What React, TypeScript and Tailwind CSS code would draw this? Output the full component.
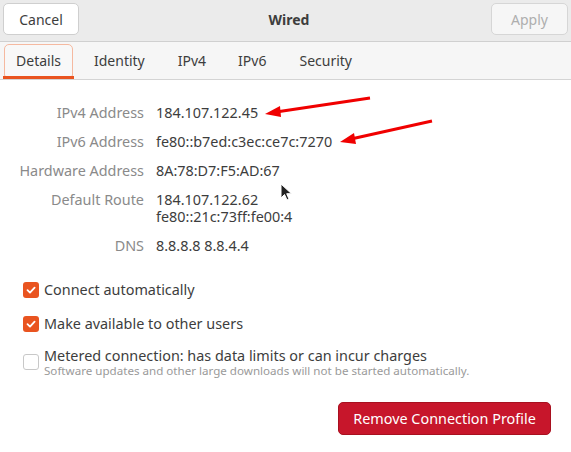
import React from "react";

const font = { fontFamily: '"Noto Sans", "DejaVu Sans", sans-serif' };

function Check({ checked }: { checked: boolean }) {
  if (checked) {
    return (
      <div className="w-[16px] h-[16px] rounded-[3px] bg-[#e95420] flex items-center justify-center shrink-0">
        <svg width="12" height="12" viewBox="0 0 12 12">
          <path d="M2.5 6.2 L5 8.6 L9.6 3.6" fill="none" stroke="white" strokeWidth="1.8" strokeLinecap="round" strokeLinejoin="round" />
        </svg>
      </div>
    );
  }
  return <div className="w-[16px] h-[16px] rounded-[3px] border border-[#c8c8c8] bg-white shrink-0" />;
}

export default function App() {
  const rows: [string, string[]][] = [
    ["IPv4 Address", ["184.107.122.45"]],
    ["IPv6 Address", ["fe80::b7ed:c3ec:ce7c:7270"]],
    ["Hardware Address", ["8A:78:D7:F5:AD:67"]],
    ["Default Route", ["184.107.122.62", "fe80::21c:73ff:fe00:4"]],
    ["DNS", ["8.8.8.8 8.8.4.4"]],
  ];
  return (
    <div className="w-[571px] h-[452px] bg-white relative overflow-hidden text-[14px] text-[#3d3d3d]" style={font}>
      {/* Header */}
      <div className="h-[42px] bg-[#ebebeb] border-b border-[#d0d0d0] flex items-start justify-between px-[3px] pt-[3px]">
        <button className="w-[76px] h-[32px] rounded-[5px] border border-[#cfcfcf] bg-white text-[#3d3d3d] text-[14px]">Cancel</button>
        <div className="font-bold text-[#3d3d3d] text-[14px] pl-[8px] h-[32px] flex items-center">Wired</div>
        <button className="w-[77px] h-[32px] rounded-[5px] border border-[#d6d6d6] bg-[#f6f6f6] text-[#aeaeae] text-[14px]">Apply</button>
      </div>
      {/* Tabs */}
      <div className="h-[38px] bg-[#f6f6f6] border-b border-[#d4d4d4] flex items-end pl-[3px]">
        <div className="relative w-[71px] h-[35px] flex items-center justify-center">
          <div className="absolute left-[1px] right-[1px] top-0 bottom-[2px] border border-[#f5b9a0] rounded-t-[5px] rounded-b-[2px] bg-[#f8f8f8]" />
          <span className="relative text-[#3d3d3d] -mt-[2px]">Details</span>
          <div className="absolute left-0 right-0 bottom-0 h-[3px] bg-[#e95420]" />
        </div>
        <div className="h-[35px] flex items-center pl-[20px] pb-[2px] gap-[33px]">
          <span>Identity</span>
          <span>IPv4</span>
          <span className="-ml-[1px]">IPv6</span>
          <span>Security</span>
        </div>
      </div>
      {/* Details */}
      <div className="pt-[24px] grid grid-cols-[144px_1fr] gap-x-[12px] gap-y-[12px] text-[14.4px]">
        {rows.map(([label, vals]) => (
          <React.Fragment key={label}>
            <div className="text-right text-[#8a8a8a] leading-[17px]">{label}</div>
            <div className="leading-[17px]">
              {vals.map((v) => (
                <div key={v}>{v}</div>
              ))}
            </div>
          </React.Fragment>
        ))}
      </div>
      {/* Checkboxes */}
      <div className="pl-[23px] pt-[27px] flex flex-col text-[14.4px]">
        <div className="flex items-center gap-[5px] h-[17px]">
          <Check checked />
          <span>Connect automatically</span>
        </div>
        <div className="flex items-center gap-[5px] h-[17px] mt-[17px]">
          <Check checked />
          <span>Make available to other users</span>
        </div>
        <div className="flex items-center gap-[5px] mt-[15px]">
          <Check checked={false} />
          <div className="flex flex-col">
            <span className="leading-[17px]">Metered connection: has data limits or can incur charges</span>
            <span className="text-[11.6px] text-[#9a9a9a] leading-[13px]">Software updates and other large downloads will not be started automatically.</span>
          </div>
        </div>
      </div>
      <div className="flex justify-end pr-[20px] pt-[25px]">
        <button className="w-[213px] h-[33px] rounded-[5px] bg-[#c7162b] border border-[#a8101f] text-white text-[14.4px]">Remove Connection Profile</button>
      </div>
      {/* Annotation arrows */}
      <svg className="absolute left-0 top-0 pointer-events-none" width="571" height="452">
        <line x1="370" y1="98" x2="276" y2="112" stroke="#f00000" strokeWidth="3" />
        <polygon points="265,114 280,106 281,117" fill="#f00000" />
        <line x1="432" y1="121" x2="351" y2="139" stroke="#f00000" strokeWidth="3" />
        <polygon points="340,142 354,133 356,144" fill="#f00000" />
      </svg>
      {/* Cursor */}
      <svg className="absolute left-[280px] top-[183px]" width="14" height="20" viewBox="0 0 14 20">
        <path d="M1 1 L1 15 L4.5 11.5 L7 17 L9 16 L6.7 10.7 L11.5 10.7 Z" fill="#222" stroke="white" strokeWidth="1" />
      </svg>
    </div>
  );
}
